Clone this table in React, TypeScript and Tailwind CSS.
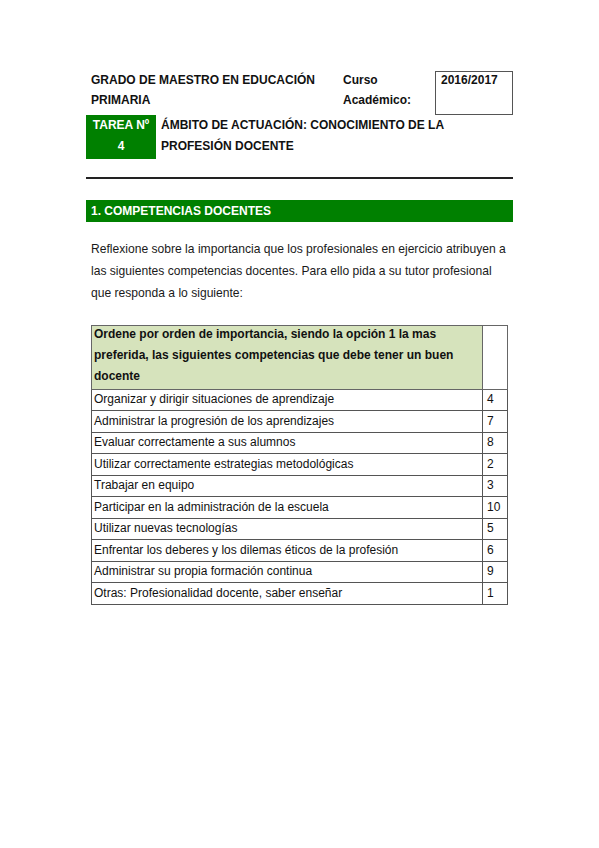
import React from "react";

const rows: [string, string][] = [
  ["Organizar y dirigir situaciones de aprendizaje", "4"],
  ["Administrar la progresión de los aprendizajes", "7"],
  ["Evaluar correctamente a sus alumnos", "8"],
  ["Utilizar correctamente estrategias metodológicas", "2"],
  ["Trabajar en equipo", "3"],
  ["Participar en la administración de la escuela", "10"],
  ["Utilizar nuevas tecnologías", "5"],
  ["Enfrentar los deberes y los dilemas éticos de la profesión", "6"],
  ["Administrar su propia formación continua", "9"],
  ["Otras: Profesionalidad docente, saber enseñar", "1"],
];

export default function App() {
  return (
    <div
      className="w-[599px] h-[848px] bg-white text-[#111] overflow-hidden"
      style={{ fontFamily: '"Liberation Sans", Arial, sans-serif' }}
    >
      <div className="pl-[86px] pt-[70px]">
        {/* Row 1 */}
        <div className="flex">
          <div className="w-[257px] pl-[5px] text-[12px] font-bold leading-[20px]">
            GRADO DE MAESTRO EN EDUCACIÓN
            <br />
            PRIMARIA
          </div>
          <div className="w-[92px] text-[12px] font-bold leading-[20px]">
            Curso
            <br />
            Académico:
          </div>
          <div className="mt-[1px] w-[78px] h-[44px] border border-[#555] pl-[5px] text-[12px] font-bold leading-[16px]">
            2016/2017
          </div>
        </div>
        {/* Row 2 */}
        <div className="flex">
          <div className="w-[70px] h-[44px] bg-[#008000] text-white text-[12px] font-bold leading-[21px] text-center">
            TAREA Nº
            <br />4
          </div>
          <div className="pl-[5px] text-[12px] font-bold leading-[21px]">
            ÁMBITO DE ACTUACIÓN: CONOCIMIENTO DE LA
            <br />
            PROFESIÓN DOCENTE
          </div>
        </div>
        {/* Rule */}
        <div className="mt-[18px] w-[427px] h-[1.5px] bg-[#222]" />
        {/* Section bar */}
        <div className="mt-[21px] w-[427px] h-[22px] bg-[#008000] text-white text-[12px] font-bold leading-[22px] pl-[5px]">
          1. COMPETENCIAS DOCENTES
        </div>
        {/* Paragraph */}
        <p className="mt-[16px] pl-[5px] text-[12.1px] leading-[22px] text-[#1a1a1a]">
          Reflexione sobre la importancia que los profesionales en ejercicio atribuyen a
          <br />
          las siguientes competencias docentes. Para ello pida a su tutor profesional
          <br />
          que responda a lo siguiente:
        </p>
        {/* Table */}
        <table className="mt-[21px] ml-[5px] w-[417px] border-collapse text-[12px] text-[#111]">
          <tbody>
            <tr>
              <td className="w-[392px] h-[64px] border border-[#666] bg-[#d6e3bc] pl-[2px] pr-[2px] align-top font-bold leading-[21px]">
                <div className="-mt-[2px]">
                  Ordene por orden de importancia, siendo la opción 1 la mas
                  <br />
                  preferida, las siguientes competencias que debe tener un buen
                  <br />
                  docente
                </div>
              </td>
              <td className="w-[25px] border border-[#666]" />
            </tr>
            {rows.map(([t, n]) => (
              <tr key={t}>
                <td className="h-[21.5px] border border-[#555] pl-[2px] leading-[19px] align-middle">
                  {t}
                </td>
                <td className="border border-[#555] pl-[4px] leading-[19px] align-middle">
                  {n}
                </td>
              </tr>
            ))}
          </tbody>
        </table>
      </div>
    </div>
  );
}
